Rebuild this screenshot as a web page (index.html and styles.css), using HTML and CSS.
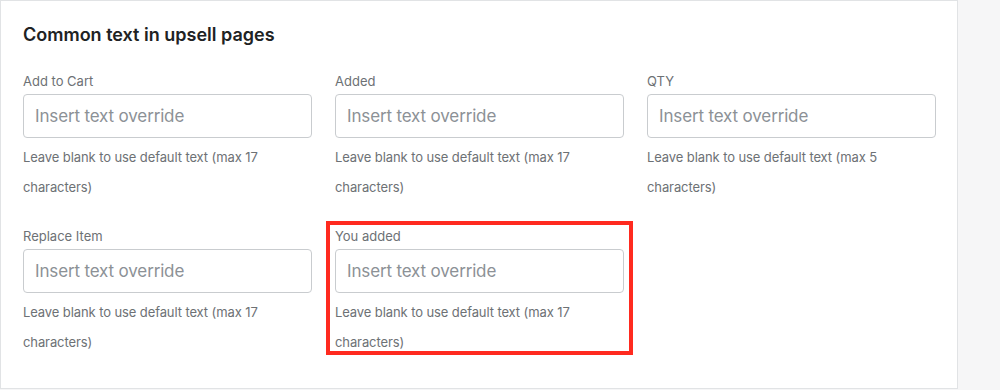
FILE: index.html
```html
<!DOCTYPE html>
<html lang="en">
  <head>
    <meta charset="UTF-8" />
    <meta name="viewport" content="width=device-width, initial-scale=1.0" />
    <title>Upsell texts</title>
    <link rel="stylesheet" href="styles.css">
  </head>
  <body>
    <div class="card">
      <h2 class="card-title">Common text in upsell pages</h2>

      <div class="fields">
        <div class="field">
          <label for="addToCart">Add to Cart</label>
          <input type="text" id="addToCart" placeholder="Insert text override" />
          <div class="help">Leave blank to use default text (max 17 characters)</div>
        </div>

        <div class="field">
          <label for="added">Added</label>
          <input type="text" id="added" placeholder="Insert text override" />
          <div class="help">Leave blank to use default text (max 17 characters)</div>
        </div>

        <div class="field">
          <label for="qty">QTY</label>
          <input type="text" id="qty" placeholder="Insert text override" />
          <div class="help">Leave blank to use default text (max 5 characters)</div>
        </div>

        <div class="field">
          <label for="replaceItem">Replace Item</label>
          <input type="text" id="replaceItem" placeholder="Insert text override" />
          <div class="help">Leave blank to use default text (max 17 characters)</div>
        </div>

        <div class="field highlight">
          <label for="youAdded">You added</label>
          <input type="text" id="youAdded" placeholder="Insert text override" />
          <div class="help">Leave blank to use default text (max 17 characters)</div>
        </div>
      </div>
    </div>
  </body>
</html>
```

FILE: styles.css
```css
body {
  font-family: Inter, "Noto Sans", sans-serif;
  margin: 0;
  padding: 0;
  background-color: #f6f6f7;
  color: #202223;
}
.card {
  width: 958px;
  box-sizing: border-box;
  background-color: #fff;
  border: 1px solid #e1e3e5;
  padding: 22px 21px 31px 22px;
}
.card-title {
  margin: 0 0 24px;
  font-size: 18px;
  line-height: 24px;
  font-weight: 600;
  color: #202223;
}
.fields {
  display: grid;
  grid-template-columns: repeat(3, 1fr);
  column-gap: 23px;
  row-gap: 24px;
}
.field {
  position: relative;
}
label {
  display: block;
  font-size: 13px;
  line-height: 20px;
  color: #6d7175;
  margin-bottom: 3px;
}
input {
  display: block;
  width: 100%;
  height: 44px;
  box-sizing: border-box;
  padding: 0 11px;
  border: 1px solid #c9cccf;
  border-radius: 4px;
  font-family: inherit;
  font-size: 17px;
  letter-spacing: -0.15px;
  color: #202223;
}
input::placeholder {
  color: #8c9196;
}
.help {
  margin-top: 4px;
  font-size: 13px;
  line-height: 30px;
  letter-spacing: -0.1px;
  color: #6d7175;
}
/* annotation round the field */
.highlight::after {
  content: "";
  position: absolute;
  top: -5px;
  left: -9px;
  right: -9px;
  bottom: 2px;
  border: 4px solid #ff2a1f;
  pointer-events: none;
}
```
